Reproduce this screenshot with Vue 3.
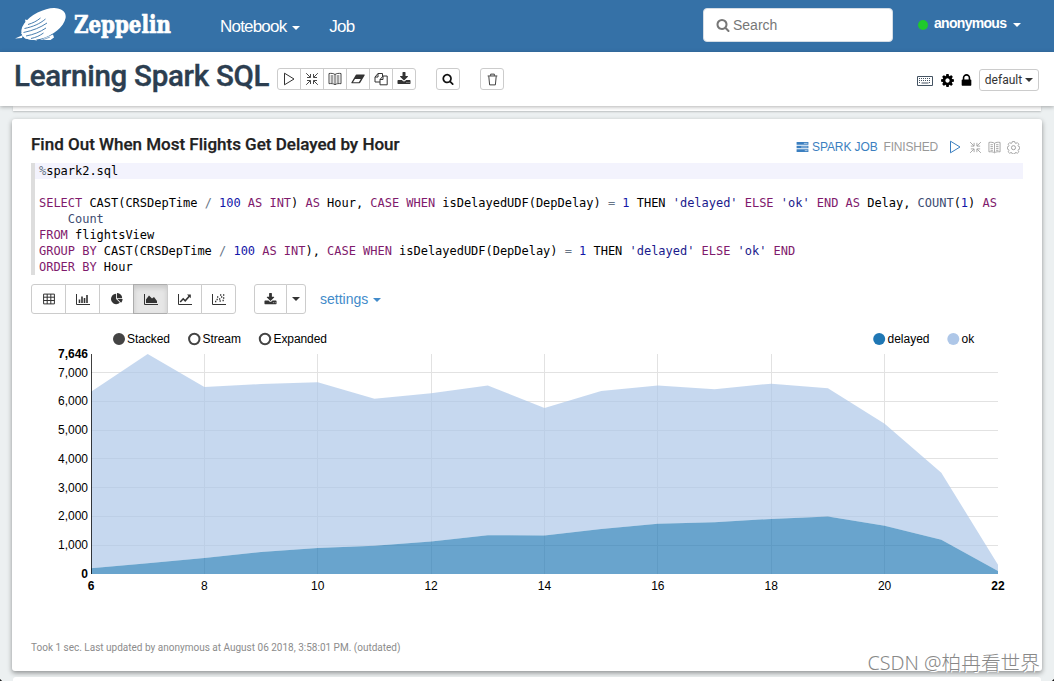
<template>
  <div class="app">
    <svg class="sprite">
      <symbol id="i-play" viewBox="0 0 14 14">
        <path d="M2.5 1.2v11.6L12 7z" fill="none" stroke="currentColor" stroke-linejoin="round" />
      </symbol>
      <symbol id="i-shrink" viewBox="0 0 14 14">
        <path
          d="M1.2 1.2l4 4M2 5.5h3.5V2M12.8 1.2l-4 4M12 5.5H8.5V2M1.2 12.8l4-4M2 8.5h3.5V12M12.8 12.8l-4-4M12 8.5H8.5V12"
          fill="none"
          stroke="currentColor"
          stroke-width=".9"
        />
      </symbol>
      <symbol id="i-book" viewBox="0 0 14 14">
        <path
          d="M7 2.5C5.5 1.3 3 1.2 1 1.5v10.200c2-.3 4.500-.2 6 1 1.500-1.200 4-1.300 6-1V1.500c-2-.3-4.500-.2-6 1zM7 2.500v10M2.700 4h2.600M2.700 6h2.600M2.700 8h2.600M2.700 10h2.600M8.700 4h2.600M8.700 6h2.600M8.700 8h2.600M8.700 10h2.600"
          fill="none"
          stroke="currentColor"
          stroke-width=".9"
        />
      </symbol>
      <symbol id="i-eraser" viewBox="0 0 14 14">
        <path d="M5.5 2.5h7.700q.8 0 .5.8L9.400 10.500q-.4.700-1 .7H.8q-.8 0-.4-.8L4.600 3.200q.3-.7.9-.7zM2 10.200h5.800l2-3.200H4z" fill="currentColor" fill-rule="evenodd" />
      </symbol>
      <symbol id="i-copy" viewBox="0 0 14 14">
        <path
          d="M6 10H1V5l3-3.500h4.500V4M4 1.500V5H1M6 12.800V7.500L9 4h4.200v8.800zM9 4v3.500H6"
          fill="none"
          stroke="currentColor"
          stroke-linejoin="round"
        />
      </symbol>
      <symbol id="i-download" viewBox="0 0 1792 1792">
        <path
          d="M1344 1344q0-26-19-45t-45-19-45 19-19 45 19 45 45 19 45-19 19-45zm256 0q0-26-19-45t-45-19-45 19-19 45 19 45 45 19 45-19 19-45zm128-224v320q0 40-28 68t-68 28h-1472q-40 0-68-28t-28-68v-320q0-40 28-68t68-28h465l135 136q58 56 136 56t136-56l136-136h464q40 0 68 28t28 68zm-325-569q17 41-14 70l-448 448q-18 19-45 19t-45-19l-448-448q-31-29-14-70 17-39 59-39h256v-448q0-26 19-45t45-19h256q26 0 45 19t19 45v448h256q42 0 59 39z"
          fill="currentColor"
        />
      </symbol>
      <symbol id="i-search" viewBox="0 0 1792 1792">
        <path
          d="M1216 832q0-185-131.500-316.500t-316.500-131.500-316.500 131.500-131.500 316.500 131.500 316.500 316.500 131.500 316.500-131.500 131.500-316.500zm512 832q0 52-38 90t-90 38q-54 0-90-38l-343-342q-179 124-399 124-143 0-273.500-55.500t-225-150-150-225-55.500-273.500 55.500-273.500 150-225 225-150 273.500-55.500 273.500 55.500 225 150 150 225 55.500 273.500q0 220-124 399l343 343q37 37 37 90z"
          fill="currentColor"
        />
      </symbol>
      <symbol id="i-trash" viewBox="0 0 14 14">
        <path d="M1.8 3.2h10.400M5 3V1.200h4V3M3 3.500l.9 9.300h6.200l.9-9.300" fill="none" stroke="currentColor" stroke-linejoin="round" />
      </symbol>
      <symbol id="i-keyboard" viewBox="0 0 16 10">
        <path d="M.5.5h15v9H.5z" fill="none" stroke="currentColor" />
        <path d="M2 2.500h12M2 4.500h12M2 6.500h2M12 6.500h2" fill="none" stroke="currentColor" stroke-dasharray="1 1" />
        <path d="M4.500 7h7" stroke="currentColor" />
      </symbol>
      <symbol id="i-cog" viewBox="0 0 1792 1792">
        <path
          d="M1152 896q0-106-75-181t-181-75-181 75-75 181 75 181 181 75 181-75 75-181zm512-109v222q0 12-8 23t-20 13l-185 28q-19 54-39 91 35 50 107 138 10 12 10 25t-9 23q-27 37-99 108t-94 71q-12 0-26-9l-138-108q-44 23-91 38-16 136-29 186-7 28-36 28h-222q-14 0-24.500-8.500t-11.500-21.500l-28-184q-49-16-90-37l-141 107q-10 9-25 9-14 0-25-11-126-114-165-168-7-10-7-23 0-12 8-23 15-21 51-66.500t54-70.500q-27-50-41-99l-183-27q-13-2-21-12.500t-8-23.500v-222q0-12 8-23t19-13l186-28q14-46 39-92-40-57-107-138-10-12-10-24 0-10 9-23 26-36 98.500-107.500t94.500-71.500q13 0 26 10l138 107q44-23 91-38 16-136 29-186 7-28 36-28h222q14 0 24.500 8.500t11.500 21.500l28 184q49 16 90 37l142-107q9-9 24-9 13 0 25 10 129 119 165 170 7 8 7 22 0 12-8 23-15 21-51 66.500t-54 70.500q26 50 41 98l183 28q13 2 21 12.500t8 23.500z"
          fill="currentColor"
        />
      </symbol>
      <symbol id="i-lock" viewBox="0 0 1792 1792">
        <path
          d="M640 768h512v-192q0-106-75-181t-181-75-181 75-75 181v192zm832 96v576q0 40-28 68t-68 28h-960q-40 0-68-28t-28-68v-576q0-40 28-68t68-28h32v-192q0-184 132-316t316-132 316 132 132 316v192h32q40 0 68 28t28 68z"
          fill="currentColor"
        />
      </symbol>
      <symbol id="i-gear" viewBox="0 0 14 14">
        <path
          d="M5.800.5h2.400l.4 1.600 1.100.5 1.400-.9 1.700 1.700-.9 1.400.5 1.100 1.300.4v2.400l-1.300.3-.5 1.100.9 1.500-1.700 1.600-1.400-.8-1.100.4-.4 1.200H5.800l-.4-1.200-1.100-.4-1.400.8-1.700-1.600.9-1.500-.5-1.100L.4 8.700V6.300l1.200-.4.5-1.100-.9-1.400 1.700-1.700 1.400.9 1.100-.5z"
          fill="none"
          stroke="currentColor"
          stroke-width=".9"
        />
        <circle cx="7" cy="7.200" r="2.200" fill="none" stroke="currentColor" />
      </symbol>
      <symbol id="i-tasks" viewBox="0 0 13 11">
        <path d="M0 0h13v3H0zM0 4h13v3H0zM0 8h13v3H0z" fill="currentColor" />
        <path d="M8 1.500h4M5 5.500h7M9 9.500h3" stroke="#fff" stroke-opacity=".7" stroke-width=".9" />
      </symbol>
      <symbol id="i-table" viewBox="0 0 12 12">
        <path d="M.6 1.100h10.800v9.800H.6zM.6 4.200h10.800M.6 7.500h10.800M4.200 1v10M7.800 1v10" fill="none" stroke="currentColor" />
      </symbol>
      <symbol id="i-bars" viewBox="0 0 14 12">
        <path d="M.5 1v10.500H14" fill="none" stroke="currentColor" />
        <path d="M3.500 10V6.500M6 10V3.500M8.500 10V5M11 10V2" stroke="currentColor" stroke-width="1.600" />
      </symbol>
      <symbol id="i-pie" viewBox="0 0 1792 1792">
        <path
          d="M768 890l546 546q-106 108-247.500 168t-298.500 60q-209 0-385.500-103t-279.500-279.500-103-385.500 103-385.500 279.500-279.500 385.500-103v762zm187 6h773q0 157-60 298.500t-168 247.500zm709-128h-768v-768q209 0 385.500 103t279.500 279.500 103 385.500z"
          fill="currentColor"
        />
      </symbol>
      <symbol id="i-area" viewBox="0 0 14 12">
        <path d="M.5 1v10.500H14" fill="none" stroke="currentColor" />
        <path d="M2 10V6.500L5 2.500l3 3 2-1.500 3 4v2z" fill="currentColor" />
      </symbol>
      <symbol id="i-line" viewBox="0 0 14 12">
        <path d="M.5 1v10.500H14" fill="none" stroke="currentColor" />
        <path d="M2.200 9l3-3.200 2 2L11.500 3" fill="none" stroke="currentColor" stroke-width="1.600" />
        <path d="M9 1.500h3.800v3.800z" fill="currentColor" />
      </symbol>
      <symbol id="i-scatter" viewBox="0 0 14 12">
        <path d="M.5 1v10.500H14" fill="none" stroke="currentColor" />
        <path
          d="M3 8.500h1.300M4.500 6.500h1.300M5 4h1.300M7 6h1.300M7.500 8h1.300M9 4h1.300M8 2h1.300M11 2h1.300M11 5h1.300M10.500 7.500h1.300"
          stroke="currentColor"
          stroke-width="1.300"
        />
      </symbol>
    </svg>

    <header class="navbar">
      <svg class="brand" width="56" height="38" viewBox="0 0 56 38">
        <ellipse cx="28.500" cy="17" rx="24" ry="13" transform="rotate(-27 28.500 17)" fill="#fff" />
        <path d="M0 31.500l8-3.500-1 3zM10 12.500l4 1-3 4zM25 33l13-5.500 1 3-3.500 2.500zM6 26l4 5.500 12 2-4-6z" fill="#fff" />
        <g fill="none" stroke="#3571a7" stroke-width=".9">
          <path d="M13 17.500c5-1.500 9-3.500 12.500-6.500M9.500 21.500c9-2 15-4.500 21-9.500M8.500 25.500c9.500-2 17-5 23.500-9.500M11 29c8-1.500 14-4 20-8M16 31.500c5-1 9-3 12.500-5.500" />
          <path d="M26 33.500l9-3.500" stroke-width=".6" />
        </g>
      </svg>
      <svg class="brand-name" width="104" height="42" viewBox="0 0 104 42">
        <text x="3" y="26" textLength="97" lengthAdjust="spacingAndGlyphs">Zeppelin</text>
      </svg>
      <nav class="menu">
        <a>Notebook <i class="caret"></i></a>
        <a>Job</a>
      </nav>
      <div class="search">
        <svg width="14" height="14"><use href="#i-search" /></svg>
        <span>Search</span>
      </div>
      <div class="user">
        <i class="status"></i>
        <span>anonymous</span>
        <i class="caret"></i>
      </div>
    </header>

    <section class="note-header">
      <h1>Learning Spark SQL</h1>
      <div class="btn-group note-actions">
        <button v-for="icon in noteActions" :key="icon">
          <svg width="14" height="14"><use :href="'#i-' + icon" /></svg>
        </button>
      </div>
      <button class="single find"><svg width="12" height="12"><use href="#i-search" /></svg></button>
      <button class="single"><svg width="13" height="13"><use href="#i-trash" /></svg></button>
      <div class="note-settings">
        <svg class="keyboard" width="16" height="10"><use href="#i-keyboard" /></svg>
        <svg class="cog" width="15" height="15"><use href="#i-cog" /></svg>
        <svg class="lock" width="15" height="15"><use href="#i-lock" /></svg>
        <button class="look">default<i class="caret"></i></button>
      </div>
    </section>

    <main>
      <div class="paragraph previous"></div>
      <article class="paragraph current">
        <div class="title-row">
          <h2>Find Out When Most Flights Get Delayed by Hour</h2>
          <div class="control">
            <svg class="blue" width="13" height="10"><use href="#i-tasks" /></svg>
            <a class="job">SPARK JOB</a>
            <span class="finished">FINISHED</span>
            <svg class="blue play" width="14" height="14"><use href="#i-play" /></svg>
            <svg width="13" height="13"><use href="#i-shrink" /></svg>
            <svg width="13" height="13"><use href="#i-book" /></svg>
            <svg width="13" height="13"><use href="#i-gear" /></svg>
          </div>
        </div>

        <div class="editor">
          <div v-for="(line, i) in code" :key="i" class="line" :class="{ active: i === 0 }">
            <span v-for="(token, j) in line" :key="j" :class="token[0]">{{ token[1] }}</span>
          </div>
        </div>

        <div class="toolbar">
          <div class="btn-group charts">
            <button v-for="c in chartTypes" :key="c" :class="{ active: c === 'area' }">
              <svg :width="c === 'table' || c === 'pie' ? 12 : 14" height="12"><use :href="'#i-' + c" /></svg>
            </button>
          </div>
          <div class="btn-group export">
            <button><svg width="13" height="13"><use href="#i-download" /></svg></button>
            <button class="drop"><i class="caret"></i></button>
          </div>
          <a class="settings">settings <i class="caret"></i></a>
        </div>

        <svg class="chart" width="1000" height="280" viewBox="31 325 1000 280">
          <g class="legend">
            <circle cx="119" cy="339" r="5.200" fill="#444" stroke="#444" stroke-width="1.600" />
            <text x="127" y="343" textLength="43">Stacked</text>
            <circle cx="194.300" cy="339" r="5.200" fill="#fff" stroke="#444" stroke-width="2" />
            <text x="202.500" y="343" textLength="38.500">Stream</text>
            <circle cx="265" cy="339" r="5.200" fill="#fff" stroke="#444" stroke-width="2" />
            <text x="273.500" y="343" textLength="53.500">Expanded</text>
            <circle cx="879.200" cy="339" r="6" fill="#1f77b4" />
            <text x="887.500" y="343" textLength="42">delayed</text>
            <circle cx="953.300" cy="339" r="6" fill="#aec7e8" />
            <text x="961.500" y="343">ok</text>
          </g>
          <g class="grid">
            <line v-for="v in yTicks" :key="'y' + v" x1="91" x2="998" :y1="snap(y(v))" :y2="snap(y(v))" />
            <line v-for="h in xTicks" :key="'x' + h" :x1="snap(x(h))" :x2="snap(x(h))" y1="354" y2="574" />
          </g>
          <path :d="okArea" fill="#aec7e8" fill-opacity=".7" />
          <path :d="delayedArea" fill="#1f77b4" fill-opacity=".67" />
          <path class="axis" d="M91.500 354v220" />
          <g class="y-labels">
            <text x="88" y="358" class="bold">7,646</text>
            <text v-for="v in yTicks" :key="v" x="88" :y="y(v) + 4">{{ v.toLocaleString('en-US') }}</text>
            <text x="88" y="578" class="bold">0</text>
          </g>
          <g class="x-labels">
            <text x="91" y="590" class="bold">6</text>
            <text v-for="h in xTicks" :key="h" :x="x(h)" y="590">{{ h }}</text>
            <text x="998" y="590" class="bold">22</text>
          </g>
        </svg>

        <footer>Took 1 sec. Last updated by anonymous at August 06 2018, 3:58:01 PM. (outdated)</footer>
      </article>
      <div class="paragraph next"></div>
    </main>
    <div class="watermark">CSDN @柏冉看世界</div>
    <i class="corner left"></i>
    <i class="corner right"></i>
  </div>
</template>

<script setup>
import { computed } from 'vue'

const noteActions = ['play', 'shrink', 'book', 'eraser', 'copy', 'download']
const chartTypes = ['table', 'bars', 'pie', 'area', 'line', 'scatter']

// [token class, text]
const code = [
  [['op', '%'], ['id', 'spark2.sql']],
  [['id', ' ']],
  [
    ['kw', 'SELECT'], ['id', ' CAST(CRSDepTime '], ['op', '/'], ['num', ' 100'], ['kw', ' AS INT'], ['id', ')'],
    ['kw', ' AS'], ['id', ' Hour, '], ['kw', 'CASE WHEN'], ['id', ' isDelayedUDF(DepDelay) '], ['op', '='],
    ['num', ' 1'], ['id', ' THEN '], ['str', "'delayed'"], ['kw', ' ELSE '], ['str', "'ok'"], ['kw', ' END AS'],
    ['id', ' Delay, '], ['fn', 'COUNT'], ['id', '('], ['num', '1'], ['id', ') '], ['kw', 'AS'],
  ],
  [['fn', '    Count']],
  [['kw', 'FROM'], ['id', ' flightsView']],
  [
    ['kw', 'GROUP BY'], ['id', ' CAST(CRSDepTime '], ['op', '/'], ['num', ' 100'], ['kw', ' AS INT'], ['id', '), '],
    ['kw', 'CASE WHEN'], ['id', ' isDelayedUDF(DepDelay) '], ['op', '='], ['num', ' 1'], ['id', ' THEN '],
    ['str', "'delayed'"], ['kw', ' ELSE '], ['str', "'ok'"], ['kw', ' END'],
  ],
  [['kw', 'ORDER BY'], ['id', ' Hour']],
]

const delayed = [200, 375, 555, 764, 903, 985, 1128, 1345, 1340, 1562, 1745, 1800, 1915, 2000, 1680, 1190, 100]
const ok = [6130, 7271, 5940, 5836, 5765, 5104, 5157, 5205, 4430, 4798, 4805, 4625, 4700, 4460, 3540, 2330, 222]
const yTicks = [1000, 2000, 3000, 4000, 5000, 6000, 7000]
const xTicks = [8, 10, 12, 14, 16, 18, 20]

const x = (hour) => 91 + ((hour - 6) * 907) / 16
const y = (value) => 574 - (value * 220) / 7646
const snap = (v) => Math.floor(v) + 0.5

const areaPath = (top, bottom) => {
  const upper = top.map((v, i) => `${x(i + 6)},${y(v)}`)
  const lower = bottom.map((v, i) => `${x(i + 6)},${y(v)}`).reverse()
  return `M${upper.concat(lower).join('L')}Z`
}

const delayedArea = computed(() => areaPath(delayed, delayed.map(() => 0)))
const okArea = computed(() => areaPath(delayed.map((v, i) => v + ok[i]), delayed))
</script>

<style>
body {
  margin: 0;
  background: #ecf0f1;
}
</style>

<style scoped>
.app {
  position: relative;
  width: 1054px;
  height: 681px;
  overflow: hidden;
  display: flex;
  flex-direction: column;
  background: #ecf0f1;
  font-family: "Liberation Sans", Arial, sans-serif;
  font-size: 14px;
  color: #333;
}

.app * {
  box-sizing: border-box;
}

.sprite {
  display: none;
}

svg {
  display: block;
  flex: none;
}

button {
  display: flex;
  align-items: center;
  justify-content: center;
  padding: 0;
  margin: 0;
  background: #fff;
  border: 1px solid #ccc;
  color: #333;
  font: inherit;
}

.caret {
  display: inline-block;
  width: 0;
  height: 0;
  border-top: 4px solid;
  border-left: 4px solid transparent;
  border-right: 4px solid transparent;
  vertical-align: middle;
}

.navbar {
  flex: none;
  height: 52px;
  display: flex;
  padding-left: 15px;
  background: #3571a7;
  color: #fff;
}

.brand {
  margin-top: 7px;
}

.brand-name {
  margin-top: 7px;
  overflow: visible;
}

.brand-name text {
  font-family: "DejaVu Serif", serif;
  font-weight: bold;
  font-size: 23.500px;
  fill: #fff;
  stroke: #fff;
  stroke-width: 0.7;
}

.menu {
  flex: none;
  display: flex;
  width: 528px;
  padding: 17px 0 0 45px;
  gap: 29px;
  font-size: 17px;
  line-height: 20px;
  letter-spacing: -0.8px;
}

.menu .caret {
  margin-left: 2px;
}

.search {
  flex: none;
  display: flex;
  align-items: center;
  width: 190px;
  height: 34px;
  margin-top: 8px;
  padding-left: 12px;
  gap: 3px;
  background: #fff;
  border: 1px solid #d5dde5;
  border-radius: 4px;
  color: #777;
  font-size: 14px;
}

.user {
  display: flex;
  align-items: center;
  height: 46px;
  margin-left: 25px;
  font-weight: bold;
  letter-spacing: -0.7px;
}

.status {
  width: 10px;
  height: 10px;
  margin-right: 6px;
  margin-top: 3px;
  border-radius: 50%;
  background: #1fc92b;
}

.user .caret {
  margin: 3px 0 0 7px;
}

.note-header {
  position: relative;
  z-index: 2;
  flex: none;
  display: flex;
  height: 54px;
  padding-left: 14px;
  background: #fff;
  box-shadow: 0 1px 4px rgba(0, 0, 0, 0.3);
}

h1 {
  width: 263px;
  margin: 6px 0 0;
  font: 500 29.500px/36px Roboto, sans-serif;
  letter-spacing: -0.270px;
  color: #2c3e50;
  -webkit-text-stroke: 0.4px #2c3e50;
  white-space: nowrap;
}

.btn-group {
  display: flex;
}

.btn-group button + button {
  margin-left: -1px;
}

.btn-group button:first-child {
  border-radius: 3px 0 0 3px;
}

.btn-group button:last-child {
  border-radius: 0 3px 3px 0;
}

.note-actions {
  margin-top: 16px;
}

.note-actions button {
  width: 24px;
  height: 22px;
}

.single {
  width: 24px;
  height: 22px;
  margin: 16px 0 0 20px;
  border-radius: 3px;
}

.single.find {
  color: #111;
}

.note-settings {
  display: flex;
  align-items: center;
  height: 22px;
  margin: 17px 15px 0 auto;
  color: #000;
}

.keyboard {
  color: #445362;
  margin: 2px 7px 0 0;
}

.cog {
  margin-right: 4px;
  margin-top: 1px;
}

.lock {
  margin-right: 5px;
  margin-top: 1px;
}

.look {
  width: 60px;
  height: 22px;
  border-radius: 3px;
  font: 12px/20px Roboto, sans-serif;
}

.look .caret {
  margin-left: 3px;
}

main {
  flex: 1;
  display: flex;
  flex-direction: column;
  padding: 0 12px;
}

.paragraph {
  background: #fff;
}

.previous {
  flex: none;
  height: 5px;
  margin: 0 1px 8px;
  box-shadow: 0 1px 2px rgba(0, 0, 0, 0.2);
}

.current {
  flex: none;
  display: flex;
  flex-direction: column;
  height: 552px;
  padding: 14px 19px 0;
  border-radius: 3px;
  box-shadow: 0 2px 5px rgba(0, 0, 0, 0.4);
}

.next {
  flex: none;
  height: 10px;
  margin: 6px 1px 0;
  border-radius: 3px;
}

.title-row {
  display: flex;
  justify-content: space-between;
  height: 30px;
}

h2 {
  margin: 0;
  font: 500 17px/22px Roboto, sans-serif;
  color: #212121;
  -webkit-text-stroke: 0.25px #212121;
  white-space: nowrap;
}

.control {
  display: flex;
  align-items: center;
  height: 28px;
  margin-right: 3px;
  gap: 6px;
  color: #999;
  font-size: 12px;
  white-space: nowrap;
}

.finished {
  letter-spacing: -0.2px;
}

.blue,
.job {
  color: #3b7fc0;
}

.job {
  letter-spacing: -0.1px;
}

.control .blue:first-child {
  margin-right: -3px;
}

.control .play {
  margin-left: 4px;
  margin-right: 1px;
}

.editor {
  width: 992px;
  height: 112px;
  border-left: 4px solid #ddd;
  font: 12px/16px "DejaVu Sans Mono", monospace;
  letter-spacing: -0.024px;
}

.line {
  height: 16px;
  padding-left: 4px;
  white-space: pre;
}

.line.active {
  background: #f3f3fd;
}

.kw {
  color: #7f1a6c;
}

.id {
  color: #000;
}

.op {
  color: #687687;
}

.num {
  color: #1216a8;
}

.str {
  color: #1a1a8c;
}

.fn {
  color: #3c4c72;
}

.toolbar {
  display: flex;
  height: 30px;
  margin-top: 9px;
}

.charts button {
  width: 35px;
  height: 30px;
}

.charts button.active {
  background: #e6e6e6;
  border-color: #adadad;
  box-shadow: inset 0 3px 5px rgba(0, 0, 0, 0.125);
}

.export {
  margin-left: 18px;
}

.export button {
  width: 33px;
  height: 30px;
}

.export .drop {
  width: 20px;
}

.settings {
  margin-left: 14px;
  line-height: 30px;
  color: #428bca;
}

.settings .caret {
  margin-left: 1px;
}

.chart {
  margin-top: 11px;
  font-size: 12px;
}

.chart text {
  fill: #000;
}

.grid line {
  stroke: #e2e2e2;
}

.axis {
  stroke: #000;
  stroke-opacity: 0.75;
}

.y-labels {
  text-anchor: end;
}

.x-labels {
  text-anchor: middle;
}

.bold {
  font-weight: bold;
}

footer {
  margin-top: 36px;
  font: 10px/14px Roboto, sans-serif;
  color: #8c8c8c;
}

.watermark {
  position: absolute;
  right: 14px;
  bottom: 6px;
  z-index: 3;
  font: 300 19.700px/24px "Noto Sans", "Noto Sans CJK SC", sans-serif;
  color: #888;
  text-shadow: 1px 1px 0 #fff;
  white-space: nowrap;
}

.corner {
  position: absolute;
  bottom: 0;
  width: 4px;
  height: 4px;
}

.corner.left {
  left: 0;
  background: radial-gradient(circle at 100% 0, transparent 4px, #222 4.500px);
}

.corner.right {
  right: 0;
  background: radial-gradient(circle at 0 0, transparent 4px, #111 4.500px);
}
</style>
